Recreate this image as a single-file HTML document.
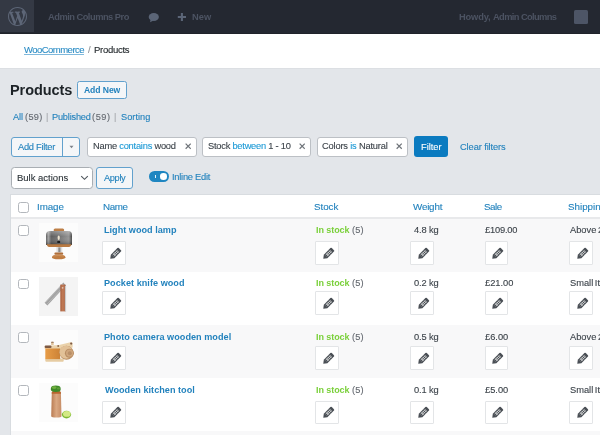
<!DOCTYPE html>
<html><head><meta charset="utf-8"><style>
html,body{margin:0;padding:0;background:#e3e6ea;}
body{width:600px;height:435px;overflow:hidden;position:relative;background:#e3e6ea;font-family:"Liberation Sans",sans-serif;}
div{box-sizing:border-box;}
.t{position:absolute;line-height:1;white-space:pre;will-change:transform;-webkit-text-stroke:0.12px currentColor;}
.bar{position:absolute;left:0;top:0;width:600px;height:33.6px;background:#242831;border-bottom:1.4px solid #20232a;}
.logo{position:absolute;left:0;top:0;width:33.8px;height:32.4px;background:#343944;}
.hdr{position:absolute;left:0;top:33.6px;width:600px;height:35px;background:#fff;border-bottom:1px solid #dcdfe3;}
.btn2{position:absolute;background:#f4f6f8;border:1px solid #62a1cd;border-radius:3px;}
.chip{position:absolute;background:#fff;border:1px solid #bcc0c5;border-radius:3px;top:137.3px;height:19.4px;}
.x{position:absolute;top:143.4px;width:6.4px;height:6.4px;}
.table{position:absolute;left:10.3px;top:194px;width:620px;height:260px;background:#fff;border:1px solid #d8dce0;}
.row{position:absolute;left:11.3px;width:600px;}
.cb{position:absolute;left:18.4px;width:10.5px;height:10.5px;border:1px solid #b3b7bc;border-radius:2.5px;background:#fff;}
.img{position:absolute;left:39.2px;width:39px;height:39px;}
.img svg{display:block;}
.pb{position:absolute;width:23.5px;height:23.5px;background:#fff;border:1px solid #e3e5e7;border-radius:1px;}
</style></head><body>
<div class="bar"></div>
<div class="logo"><svg style="position:absolute;left:8.2px;top:6.7px" width="19" height="19" viewBox="0 0 20 20"><path fill="#5d6677" d="M20 10c0-5.51-4.49-10-10-10C4.48 0 0 4.49 0 10c0 5.52 4.48 10 10 10 5.510 0 10-4.480 10-10zM7.78 15.37L4.37 6.22c.55-.02 1.17-.08 1.17-.08.5-.06.44-1.13-.06-1.11 0 0-1.45.11-2.37.11-.18 0-.37 0-.58-.01C4.12 2.69 6.87 1.11 10 1.11c2.33 0 4.45.87 6.05 2.34-.68-.11-1.65.39-1.65 1.58 0 .74.45 1.36.9 2.1.35.61.55 1.36.55 2.46 0 1.49-1.4 5-1.4 5l-3.03-8.37c.54-.02.82-.17.82-.17.5-.05.44-1.25-.06-1.22 0 0-1.44.12-2.38.12-.87 0-2.33-.12-2.33-.12-.5-.03-.56 1.2-.06 1.22l.92.08 1.26 3.41zM17.41 10c.24-.64.74-1.87.43-4.25.7 1.29 1.05 2.71 1.05 4.25 0 3.29-1.73 6.24-4.4 7.78.97-2.59 1.94-5.2 2.92-7.780zM6.1 18.09C3.12 16.65 1.11 13.53 1.11 10c0-1.3.23-2.48.72-3.59C3.25 10.3 4.67 14.2 6.1 18.09zm4.03-6.63l2.58 6.98c-.86.29-1.76.45-2.71.45-.79 0-1.57-.11-2.29-.33.81-2.38 1.62-4.74 2.42-7.1z"/></svg></div>
<svg style="position:absolute;left:148px;top:12px" width="12" height="11" viewBox="0 0 12 11"><ellipse cx="5.8" cy="5" rx="5.1" ry="4" fill="#5b6577"/><path d="M2.6 7.5 L2 10.3 L5.6 8.6 Z" fill="#5b6577"/></svg>
<svg style="position:absolute;left:177px;top:12px" width="10" height="10" viewBox="0 0 10 10"><path d="M4.9 1 V9 M0.8 5 H9" stroke="#5b6577" stroke-width="2.1"/></svg>
<div style="position:absolute;left:574.3px;top:9.5px;width:14px;height:14px;background:#4d5566;border-radius:1.5px"></div>
<div class="hdr"></div>
<div class="btn2" style="left:77.4px;top:81px;width:49.5px;height:18.2px;border-radius:2.5px"></div>
<div class="btn2" style="left:10.5px;top:136.7px;width:69.8px;height:20px"></div>
<div style="position:absolute;left:62px;top:137px;width:1px;height:19px;background:#62a1cd"></div>
<svg style="position:absolute;left:69px;top:145px" width="5" height="4" viewBox="0 0 5 4"><path d="M0.5 0.8 H4.5 L2.5 3.2 Z" fill="#7b8088"/></svg>
<div class="chip" style="left:87.4px;width:109.5px"></div>
<div class="chip" style="left:202.4px;width:109px"></div>
<div class="chip" style="left:316.6px;width:91.8px"></div>
<svg class="x" style="left:184.7px" viewBox="0 0 7 7"><path d="M0.7 0.7 L6.3 6.3 M6.3 0.7 L0.7 6.3" stroke="#6f747a" stroke-width="1.35"/></svg>
<svg class="x" style="left:299px" viewBox="0 0 7 7"><path d="M0.7 0.7 L6.3 6.3 M6.3 0.7 L0.7 6.3" stroke="#6f747a" stroke-width="1.35"/></svg>
<svg class="x" style="left:396.4px" viewBox="0 0 7 7"><path d="M0.7 0.7 L6.3 6.3 M6.3 0.7 L0.7 6.3" stroke="#6f747a" stroke-width="1.35"/></svg>
<div style="position:absolute;left:414px;top:136px;width:34px;height:21px;background:#0b7bc0;border-radius:3px"></div>
<div style="position:absolute;left:11px;top:167px;width:82.3px;height:22px;background:#fff;border:1px solid #a9aeb3;border-radius:3.5px"></div>
<svg style="position:absolute;left:79.9px;top:175.4px" width="9" height="6" viewBox="0 0 9 6"><path d="M1.2 1.1 L4.5 4.3 L7.8 1.1" fill="none" stroke="#50575e" stroke-width="1.15"/></svg>
<div class="btn2" style="left:96px;top:167px;width:37px;height:21.8px"></div>
<div style="position:absolute;left:149.2px;top:171px;width:19.9px;height:11px;background:#1f86c1;border-radius:5.5px"></div>
<div style="position:absolute;left:160.45px;top:173.3px;width:6.6px;height:6.6px;background:#fff;border-radius:50%"></div>
<div style="position:absolute;left:154.6px;top:174.9px;width:1.2px;height:3.6px;background:#e6f1f8"></div>
<div class="table"></div>
<div style="position:absolute;left:11.3px;top:216.8px;width:600px;height:2.2px;background:#e8e9eb"></div>
<div class="cb" style="top:202.1px"></div>
<div class="row" style="top:219px;height:52.5px;background:#f8f8f9"></div>
<div class="row" style="top:271.5px;height:53.39999999999998px;background:#ffffff"></div>
<div class="row" style="top:324.9px;height:53.30000000000001px;background:#f8f8f9"></div>
<div class="row" style="top:378.2px;height:52.80000000000001px;background:#ffffff"></div>
<div class="row" style="top:431px;height:10px;background:#f8f8f9"></div>
<div class="cb" style="top:225.3px"></div>
<div class="img" style="top:222.8px"><svg width="39" height="39" viewBox="0 0 39 39"><defs><linearGradient id="gl" x1="0" x2="1" y1="0" y2="0"><stop offset="0" stop-color="#4a4a4a"/><stop offset="0.08" stop-color="#a8a8a8"/><stop offset="0.2" stop-color="#5f5f5f"/><stop offset="0.55" stop-color="#767676"/><stop offset="0.88" stop-color="#959595"/><stop offset="1" stop-color="#454545"/></linearGradient><linearGradient id="gv" x1="0" x2="0" y1="0" y2="1"><stop offset="0" stop-color="#fff" stop-opacity="0.3"/><stop offset="0.4" stop-color="#fff" stop-opacity="0"/><stop offset="1" stop-color="#000" stop-opacity="0.35"/></linearGradient></defs><rect width="39" height="39" fill="#fcfcfc"/><rect x="14.6" y="5.4" width="10.6" height="3" rx="1.5" fill="#bd7f47"/><path d="M7.1 11.8 Q7.2 8 11 8 L29 8 Q32.9 8 33 11.8 L33 22 L7.1 22 Z" fill="url(#gl)"/><path d="M7.1 11.8 Q7.2 8 11 8 L29 8 Q32.9 8 33 11.8 L33 22 L7.1 22 Z" fill="url(#gv)"/><ellipse cx="19.7" cy="14.8" rx="1.1" ry="2.3" fill="#ece3cf"/><rect x="18.3" y="18" width="2.8" height="2" fill="#1e1e1e"/><path d="M7.6 21.2 L32.6 21.2 Q31.8 24 28.8 24.1 L11.2 24.1 Q8.3 24 7.6 21.2 Z" fill="#b97a42"/><rect x="17.4" y="24" width="5.9" height="5.6" fill="#dedede"/><rect x="19.3" y="24.4" width="2.2" height="4.8" fill="#8a8a8a"/><rect x="15.4" y="29.4" width="8.8" height="2.4" rx="1" fill="#b06f3b"/><path d="M13 34.2 Q13.2 31.4 19.7 31.4 Q26.2 31.4 26.4 34.2 Q26.3 36.3 19.7 36.3 Q13.1 36.3 13 34.2 Z" fill="#bf7d43"/><path d="M14.4 33 Q19.7 32 25 33" stroke="#dba16c" stroke-width="0.6" fill="none"/></svg></div>
<div class="pb" style="left:102.3px;top:241.2px"><svg width="16" height="16" viewBox="0 0 16 16" style="position:absolute;left:3.4px;top:3.9px"><g transform="rotate(-45 8 8)"><path d="M1.3 8 L4.6 5.5 L13.9 5.5 Q14.9 5.5 14.9 6.5 L14.9 9.5 Q14.9 10.5 13.9 10.5 L4.6 10.5 Z" fill="#4a4f55"/><path d="M5.4 7.2 H12.4 M5.4 8.8 H12.4 M7.2 6.4 V9.6 M9.2 6.4 V9.6 M11.2 6.4 V9.6" stroke="#e4e5e6" stroke-width="0.7"/></g></svg></div>
<div class="pb" style="left:315.4px;top:241.2px"><svg width="16" height="16" viewBox="0 0 16 16" style="position:absolute;left:3.4px;top:3.9px"><g transform="rotate(-45 8 8)"><path d="M1.3 8 L4.6 5.5 L13.9 5.5 Q14.9 5.5 14.9 6.5 L14.9 9.5 Q14.9 10.5 13.9 10.5 L4.6 10.5 Z" fill="#4a4f55"/><path d="M5.4 7.2 H12.4 M5.4 8.8 H12.4 M7.2 6.4 V9.6 M9.2 6.4 V9.6 M11.2 6.4 V9.6" stroke="#e4e5e6" stroke-width="0.7"/></g></svg></div>
<div class="pb" style="left:410.2px;top:241.2px"><svg width="16" height="16" viewBox="0 0 16 16" style="position:absolute;left:3.4px;top:3.9px"><g transform="rotate(-45 8 8)"><path d="M1.3 8 L4.6 5.5 L13.9 5.5 Q14.9 5.5 14.9 6.5 L14.9 9.5 Q14.9 10.5 13.9 10.5 L4.6 10.5 Z" fill="#4a4f55"/><path d="M5.4 7.2 H12.4 M5.4 8.8 H12.4 M7.2 6.4 V9.6 M9.2 6.4 V9.6 M11.2 6.4 V9.6" stroke="#e4e5e6" stroke-width="0.7"/></g></svg></div>
<div class="pb" style="left:484.9px;top:241.2px"><svg width="16" height="16" viewBox="0 0 16 16" style="position:absolute;left:3.4px;top:3.9px"><g transform="rotate(-45 8 8)"><path d="M1.3 8 L4.6 5.5 L13.9 5.5 Q14.9 5.5 14.9 6.5 L14.9 9.5 Q14.9 10.5 13.9 10.5 L4.6 10.5 Z" fill="#4a4f55"/><path d="M5.4 7.2 H12.4 M5.4 8.8 H12.4 M7.2 6.4 V9.6 M9.2 6.4 V9.6 M11.2 6.4 V9.6" stroke="#e4e5e6" stroke-width="0.7"/></g></svg></div>
<div class="pb" style="left:569.4px;top:241.2px"><svg width="16" height="16" viewBox="0 0 16 16" style="position:absolute;left:3.4px;top:3.9px"><g transform="rotate(-45 8 8)"><path d="M1.3 8 L4.6 5.5 L13.9 5.5 Q14.9 5.5 14.9 6.5 L14.9 9.5 Q14.9 10.5 13.9 10.5 L4.6 10.5 Z" fill="#4a4f55"/><path d="M5.4 7.2 H12.4 M5.4 8.8 H12.4 M7.2 6.4 V9.6 M9.2 6.4 V9.6 M11.2 6.4 V9.6" stroke="#e4e5e6" stroke-width="0.7"/></g></svg></div>
<div class="cb" style="top:278.6px"></div>
<div class="img" style="top:276.6px"><svg width="39" height="39" viewBox="0 0 39 39"><defs><linearGradient id="kh" x1="0" x2="1"><stop offset="0" stop-color="#a95f3e"/><stop offset="0.5" stop-color="#c27c57"/><stop offset="1" stop-color="#a85e3f"/></linearGradient></defs><rect width="39" height="39" fill="#f4f4f4"/><path d="M24.4 5.4 L26.8 8.4 L8.4 28.6 L5.6 25.8 Z" fill="#a2a2a2"/><path d="M23.8 7 L6.6 25.4 M25.2 8.8 L7.8 27.4" stroke="#c6c6c6" stroke-width="0.55"/><rect x="21.3" y="7.6" width="5.2" height="26.8" fill="url(#kh)"/><rect x="25.9" y="9" width="1.2" height="25.4" fill="#cbcbcb"/><circle cx="23.6" cy="10.8" r="0.9" fill="#e2c6b4"/></svg></div>
<div class="pb" style="left:102.3px;top:291.1px"><svg width="16" height="16" viewBox="0 0 16 16" style="position:absolute;left:3.4px;top:3.9px"><g transform="rotate(-45 8 8)"><path d="M1.3 8 L4.6 5.5 L13.9 5.5 Q14.9 5.5 14.9 6.5 L14.9 9.5 Q14.9 10.5 13.9 10.5 L4.6 10.5 Z" fill="#4a4f55"/><path d="M5.4 7.2 H12.4 M5.4 8.8 H12.4 M7.2 6.4 V9.6 M9.2 6.4 V9.6 M11.2 6.4 V9.6" stroke="#e4e5e6" stroke-width="0.7"/></g></svg></div>
<div class="pb" style="left:315.4px;top:291.1px"><svg width="16" height="16" viewBox="0 0 16 16" style="position:absolute;left:3.4px;top:3.9px"><g transform="rotate(-45 8 8)"><path d="M1.3 8 L4.6 5.5 L13.9 5.5 Q14.9 5.5 14.9 6.5 L14.9 9.5 Q14.9 10.5 13.9 10.5 L4.6 10.5 Z" fill="#4a4f55"/><path d="M5.4 7.2 H12.4 M5.4 8.8 H12.4 M7.2 6.4 V9.6 M9.2 6.4 V9.6 M11.2 6.4 V9.6" stroke="#e4e5e6" stroke-width="0.7"/></g></svg></div>
<div class="pb" style="left:410.2px;top:291.1px"><svg width="16" height="16" viewBox="0 0 16 16" style="position:absolute;left:3.4px;top:3.9px"><g transform="rotate(-45 8 8)"><path d="M1.3 8 L4.6 5.5 L13.9 5.5 Q14.9 5.5 14.9 6.5 L14.9 9.5 Q14.9 10.5 13.9 10.5 L4.6 10.5 Z" fill="#4a4f55"/><path d="M5.4 7.2 H12.4 M5.4 8.8 H12.4 M7.2 6.4 V9.6 M9.2 6.4 V9.6 M11.2 6.4 V9.6" stroke="#e4e5e6" stroke-width="0.7"/></g></svg></div>
<div class="pb" style="left:484.9px;top:291.1px"><svg width="16" height="16" viewBox="0 0 16 16" style="position:absolute;left:3.4px;top:3.9px"><g transform="rotate(-45 8 8)"><path d="M1.3 8 L4.6 5.5 L13.9 5.5 Q14.9 5.5 14.9 6.5 L14.9 9.5 Q14.9 10.5 13.9 10.5 L4.6 10.5 Z" fill="#4a4f55"/><path d="M5.4 7.2 H12.4 M5.4 8.8 H12.4 M7.2 6.4 V9.6 M9.2 6.4 V9.6 M11.2 6.4 V9.6" stroke="#e4e5e6" stroke-width="0.7"/></g></svg></div>
<div class="pb" style="left:569.4px;top:291.1px"><svg width="16" height="16" viewBox="0 0 16 16" style="position:absolute;left:3.4px;top:3.9px"><g transform="rotate(-45 8 8)"><path d="M1.3 8 L4.6 5.5 L13.9 5.5 Q14.9 5.5 14.9 6.5 L14.9 9.5 Q14.9 10.5 13.9 10.5 L4.6 10.5 Z" fill="#4a4f55"/><path d="M5.4 7.2 H12.4 M5.4 8.8 H12.4 M7.2 6.4 V9.6 M9.2 6.4 V9.6 M11.2 6.4 V9.6" stroke="#e4e5e6" stroke-width="0.7"/></g></svg></div>
<div class="cb" style="top:332.1px"></div>
<div class="img" style="top:330.1px"><svg width="39" height="39" viewBox="0 0 39 39"><defs><linearGradient id="cf" x1="0" x2="1"><stop offset="0" stop-color="#e89d48"/><stop offset="1" stop-color="#cc8236"/></linearGradient></defs><rect width="39" height="39" fill="#fcfcfc"/><rect x="6.3" y="28.4" width="18.4" height="3.3" rx="1" fill="#e6cca3"/><path d="M5.7 16 L20 15 L31.5 12.3 Q33.4 12 33.6 13.5 L33.6 17.5 L21.2 19 L5.7 19 Z" fill="#ead2ab"/><rect x="12.1" y="11.8" width="2.6" height="3.2" rx="0.6" fill="#e2c59c"/><rect x="12.1" y="11.8" width="2.6" height="1" rx="0.5" fill="#8c6a50"/><rect x="6.3" y="18.5" width="14.9" height="10.6" fill="url(#cf)"/><rect x="5.7" y="15.6" width="6.8" height="2.4" rx="1" fill="#7d5a45"/><circle cx="19.2" cy="16" r="0.9" fill="#8a6548"/><circle cx="32.2" cy="13.6" r="1.1" fill="#7d5a45"/><circle cx="27.5" cy="22.8" r="7" fill="#b98d62"/><circle cx="27.1" cy="22.2" r="6.5" fill="#e2c197"/><circle cx="30.4" cy="23.2" r="4.5" fill="#b88d63"/><circle cx="30.6" cy="23.1" r="3.6" fill="#cfa67c"/><circle cx="30.8" cy="23.2" r="2" fill="#b98f68"/></svg></div>
<div class="pb" style="left:102.3px;top:346.1px"><svg width="16" height="16" viewBox="0 0 16 16" style="position:absolute;left:3.4px;top:3.9px"><g transform="rotate(-45 8 8)"><path d="M1.3 8 L4.6 5.5 L13.9 5.5 Q14.9 5.5 14.9 6.5 L14.9 9.5 Q14.9 10.5 13.9 10.5 L4.6 10.5 Z" fill="#4a4f55"/><path d="M5.4 7.2 H12.4 M5.4 8.8 H12.4 M7.2 6.4 V9.6 M9.2 6.4 V9.6 M11.2 6.4 V9.6" stroke="#e4e5e6" stroke-width="0.7"/></g></svg></div>
<div class="pb" style="left:315.4px;top:346.1px"><svg width="16" height="16" viewBox="0 0 16 16" style="position:absolute;left:3.4px;top:3.9px"><g transform="rotate(-45 8 8)"><path d="M1.3 8 L4.6 5.5 L13.9 5.5 Q14.9 5.5 14.9 6.5 L14.9 9.5 Q14.9 10.5 13.9 10.5 L4.6 10.5 Z" fill="#4a4f55"/><path d="M5.4 7.2 H12.4 M5.4 8.8 H12.4 M7.2 6.4 V9.6 M9.2 6.4 V9.6 M11.2 6.4 V9.6" stroke="#e4e5e6" stroke-width="0.7"/></g></svg></div>
<div class="pb" style="left:410.2px;top:346.1px"><svg width="16" height="16" viewBox="0 0 16 16" style="position:absolute;left:3.4px;top:3.9px"><g transform="rotate(-45 8 8)"><path d="M1.3 8 L4.6 5.5 L13.9 5.5 Q14.9 5.5 14.9 6.5 L14.9 9.5 Q14.9 10.5 13.9 10.5 L4.6 10.5 Z" fill="#4a4f55"/><path d="M5.4 7.2 H12.4 M5.4 8.8 H12.4 M7.2 6.4 V9.6 M9.2 6.4 V9.6 M11.2 6.4 V9.6" stroke="#e4e5e6" stroke-width="0.7"/></g></svg></div>
<div class="pb" style="left:484.9px;top:346.1px"><svg width="16" height="16" viewBox="0 0 16 16" style="position:absolute;left:3.4px;top:3.9px"><g transform="rotate(-45 8 8)"><path d="M1.3 8 L4.6 5.5 L13.9 5.5 Q14.9 5.5 14.9 6.5 L14.9 9.5 Q14.9 10.5 13.9 10.5 L4.6 10.5 Z" fill="#4a4f55"/><path d="M5.4 7.2 H12.4 M5.4 8.8 H12.4 M7.2 6.4 V9.6 M9.2 6.4 V9.6 M11.2 6.4 V9.6" stroke="#e4e5e6" stroke-width="0.7"/></g></svg></div>
<div class="pb" style="left:569.4px;top:346.1px"><svg width="16" height="16" viewBox="0 0 16 16" style="position:absolute;left:3.4px;top:3.9px"><g transform="rotate(-45 8 8)"><path d="M1.3 8 L4.6 5.5 L13.9 5.5 Q14.9 5.5 14.9 6.5 L14.9 9.5 Q14.9 10.5 13.9 10.5 L4.6 10.5 Z" fill="#4a4f55"/><path d="M5.4 7.2 H12.4 M5.4 8.8 H12.4 M7.2 6.4 V9.6 M9.2 6.4 V9.6 M11.2 6.4 V9.6" stroke="#e4e5e6" stroke-width="0.7"/></g></svg></div>
<div class="cb" style="top:385px"></div>
<div class="img" style="top:383.4px"><svg width="39" height="39" viewBox="0 0 39 39"><defs><linearGradient id="tb" x1="0" x2="1"><stop offset="0" stop-color="#b97b52"/><stop offset="0.5" stop-color="#daa882"/><stop offset="1" stop-color="#c68d66"/></linearGradient></defs><rect width="39" height="39" fill="#fcfcfc"/><path d="M12.8 9.4 Q13 8 17.3 8 Q21.6 8 21.9 9.4 L22.5 33.2 Q22.5 34.6 17.4 34.6 Q12.3 34.6 12.2 33.2 Z" fill="url(#tb)"/><path d="M12.8 9.4 Q13 8 17.3 8 Q21.6 8 21.9 9.4 L22 10.8 L12.7 10.8 Z" fill="#b8652f"/><path d="M11.8 6.6 Q11.6 3 14.8 2.8 Q16.8 2 18.8 2.8 Q21.9 3 21.7 6.4 Q21.8 8.9 16.8 8.9 Q11.9 9 11.8 6.6 Z" fill="#3f8a2a"/><ellipse cx="15.2" cy="4.6" rx="2.4" ry="1.4" fill="#72b040"/><ellipse cx="19.4" cy="5.4" rx="1.6" ry="1.1" fill="#5e9f38"/><ellipse cx="27.5" cy="31.6" rx="4.6" ry="3.8" fill="#7cb832"/><ellipse cx="27.8" cy="30.9" rx="3.8" ry="2.9" fill="#d4e985"/></svg></div>
<div class="pb" style="left:102.3px;top:400.5px"><svg width="16" height="16" viewBox="0 0 16 16" style="position:absolute;left:3.4px;top:3.9px"><g transform="rotate(-45 8 8)"><path d="M1.3 8 L4.6 5.5 L13.9 5.5 Q14.9 5.5 14.9 6.5 L14.9 9.5 Q14.9 10.5 13.9 10.5 L4.6 10.5 Z" fill="#4a4f55"/><path d="M5.4 7.2 H12.4 M5.4 8.8 H12.4 M7.2 6.4 V9.6 M9.2 6.4 V9.6 M11.2 6.4 V9.6" stroke="#e4e5e6" stroke-width="0.7"/></g></svg></div>
<div class="pb" style="left:315.4px;top:400.5px"><svg width="16" height="16" viewBox="0 0 16 16" style="position:absolute;left:3.4px;top:3.9px"><g transform="rotate(-45 8 8)"><path d="M1.3 8 L4.6 5.5 L13.9 5.5 Q14.9 5.5 14.9 6.5 L14.9 9.5 Q14.9 10.5 13.9 10.5 L4.6 10.5 Z" fill="#4a4f55"/><path d="M5.4 7.2 H12.4 M5.4 8.8 H12.4 M7.2 6.4 V9.6 M9.2 6.4 V9.6 M11.2 6.4 V9.6" stroke="#e4e5e6" stroke-width="0.7"/></g></svg></div>
<div class="pb" style="left:410.2px;top:400.5px"><svg width="16" height="16" viewBox="0 0 16 16" style="position:absolute;left:3.4px;top:3.9px"><g transform="rotate(-45 8 8)"><path d="M1.3 8 L4.6 5.5 L13.9 5.5 Q14.9 5.5 14.9 6.5 L14.9 9.5 Q14.9 10.5 13.9 10.5 L4.6 10.5 Z" fill="#4a4f55"/><path d="M5.4 7.2 H12.4 M5.4 8.8 H12.4 M7.2 6.4 V9.6 M9.2 6.4 V9.6 M11.2 6.4 V9.6" stroke="#e4e5e6" stroke-width="0.7"/></g></svg></div>
<div class="pb" style="left:484.9px;top:400.5px"><svg width="16" height="16" viewBox="0 0 16 16" style="position:absolute;left:3.4px;top:3.9px"><g transform="rotate(-45 8 8)"><path d="M1.3 8 L4.6 5.5 L13.9 5.5 Q14.9 5.5 14.9 6.5 L14.9 9.5 Q14.9 10.5 13.9 10.5 L4.6 10.5 Z" fill="#4a4f55"/><path d="M5.4 7.2 H12.4 M5.4 8.8 H12.4 M7.2 6.4 V9.6 M9.2 6.4 V9.6 M11.2 6.4 V9.6" stroke="#e4e5e6" stroke-width="0.7"/></g></svg></div>
<div class="pb" style="left:569.4px;top:400.5px"><svg width="16" height="16" viewBox="0 0 16 16" style="position:absolute;left:3.4px;top:3.9px"><g transform="rotate(-45 8 8)"><path d="M1.3 8 L4.6 5.5 L13.9 5.5 Q14.9 5.5 14.9 6.5 L14.9 9.5 Q14.9 10.5 13.9 10.5 L4.6 10.5 Z" fill="#4a4f55"/><path d="M5.4 7.2 H12.4 M5.4 8.8 H12.4 M7.2 6.4 V9.6 M9.2 6.4 V9.6 M11.2 6.4 V9.6" stroke="#e4e5e6" stroke-width="0.7"/></g></svg></div>
<div class="t" style="left:47.75px;top:13.00px;font-size:9.3px;font-weight:700;color:#4c5362;letter-spacing:-0.503px;-webkit-text-stroke:0;">Admin Columns Pro</div>
<div class="t" style="left:192.00px;top:13.00px;font-size:9.3px;font-weight:700;color:#4c5362;letter-spacing:0.0px;-webkit-text-stroke:0;">New</div>
<div class="t" style="left:458.50px;top:13.00px;font-size:9.3px;font-weight:700;color:#4c5362;letter-spacing:-0.15px;-webkit-text-stroke:0;">Howdy,</div>
<div class="t" style="left:493.25px;top:13.00px;font-size:9.3px;font-weight:700;color:#4c5362;letter-spacing:-0.604px;-webkit-text-stroke:0;">Admin Columns</div>
<div class="t" style="left:23.70px;top:45.00px;font-size:9.5px;font-weight:400;color:#2a8bc4;letter-spacing:-0.53px;text-decoration:underline;text-underline-offset:1px;text-decoration-color:#80b9dc;-webkit-text-stroke:0.1px currentColor;">WooCommerce</div>
<div class="t" style="left:87.60px;top:45.00px;font-size:9.5px;font-weight:400;color:#8c8f94;letter-spacing:0px;">/</div>
<div class="t" style="left:93.95px;top:45.00px;font-size:9.5px;font-weight:400;color:#1d2327;letter-spacing:-0.286px;">Products</div>
<div class="t" style="left:10.30px;top:83.00px;font-size:14.5px;font-weight:700;color:#1d2327;letter-spacing:-0.079px;-webkit-text-stroke:0;">Products</div>
<div class="t" style="left:83.85px;top:86.00px;font-size:8.6px;font-weight:700;color:#2282bd;letter-spacing:-0.083px;-webkit-text-stroke:0;">Add New</div>
<div class="t" style="left:12.50px;top:113.00px;font-size:9.2px;font-weight:400;color:#2282bd;letter-spacing:-0.125px;">All</div>
<div class="t" style="left:24.50px;top:113.00px;font-size:9.2px;font-weight:400;color:#646970;letter-spacing:0.333px;">(59)</div>
<div class="t" style="left:45.50px;top:113.00px;font-size:9.2px;font-weight:400;color:#a7aaad;letter-spacing:0px;">|</div>
<div class="t" style="left:51.75px;top:113.00px;font-size:9.2px;font-weight:400;color:#2282bd;letter-spacing:-0.188px;">Published</div>
<div class="t" style="left:92.00px;top:113.00px;font-size:9.2px;font-weight:400;color:#646970;letter-spacing:0.583px;">(59)</div>
<div class="t" style="left:114.25px;top:113.00px;font-size:9.2px;font-weight:400;color:#a7aaad;letter-spacing:0px;">|</div>
<div class="t" style="left:120.75px;top:113.00px;font-size:9.2px;font-weight:400;color:#2282bd;letter-spacing:0.042px;">Sorting</div>
<div class="t" style="left:18.20px;top:143.00px;font-size:9.3px;font-weight:400;color:#2282bd;letter-spacing:-0.272px;">Add Filter</div>
<div class="t" style="left:93.25px;top:142.30px;font-size:9.3px;font-weight:400;color:#3c434a;letter-spacing:-0.229px;">Name <span style="color:#1e9ad6">contains</span> wood</div>
<div class="t" style="left:207.90px;top:142.30px;font-size:9.3px;font-weight:400;color:#3c434a;letter-spacing:-0.237px;">Stock <span style="color:#1e9ad6">between</span> 1 - 10</div>
<div class="t" style="left:322.10px;top:142.30px;font-size:9.3px;font-weight:400;color:#3c434a;letter-spacing:-0.184px;">Colors <span style="color:#1e9ad6">is</span> Natural</div>
<div class="t" style="left:420.65px;top:143.00px;font-size:9.3px;font-weight:400;color:#ffffff;letter-spacing:-0.03px;-webkit-text-stroke:0.1px #fff;">Filter</div>
<div class="t" style="left:459.50px;top:143.00px;font-size:9.3px;font-weight:400;color:#2282bd;letter-spacing:-0.104px;">Clear filters</div>
<div class="t" style="left:17.05px;top:173.00px;font-size:9.5px;font-weight:400;color:#2c3338;letter-spacing:-0.005px;">Bulk actions</div>
<div class="t" style="left:103.60px;top:174.00px;font-size:9.3px;font-weight:400;color:#2282bd;letter-spacing:-0.388px;">Apply</div>
<div class="t" style="left:171.55px;top:173.00px;font-size:9.3px;font-weight:400;color:#2282bd;letter-spacing:-0.25px;">Inline Edit</div>
<div class="t" style="left:36.90px;top:202.00px;font-size:9.8px;font-weight:400;color:#2282bd;letter-spacing:-0.088px;">Image</div>
<div class="t" style="left:102.75px;top:202.00px;font-size:9.8px;font-weight:400;color:#2282bd;letter-spacing:-0.4px;">Name</div>
<div class="t" style="left:314.20px;top:202.00px;font-size:9.8px;font-weight:400;color:#2282bd;letter-spacing:-0.05px;">Stock</div>
<div class="t" style="left:412.50px;top:202.00px;font-size:9.8px;font-weight:400;color:#2282bd;letter-spacing:-0.19px;">Weight</div>
<div class="t" style="left:483.50px;top:202.00px;font-size:9.8px;font-weight:400;color:#2282bd;letter-spacing:-0.45px;">Sale</div>
<div class="t" style="left:568.40px;top:202.00px;font-size:9.8px;font-weight:400;color:#2282bd;letter-spacing:0px;">Shipping</div>
<div class="t" style="left:104.40px;top:226.00px;font-size:9.1px;font-weight:700;color:#2282bd;letter-spacing:0.021px;-webkit-text-stroke:0;">Light wood lamp</div>
<div class="t" style="left:315.60px;top:226.00px;font-size:9px;font-weight:700;color:#7ad03a;letter-spacing:-0.071px;-webkit-text-stroke:0;">In stock</div>
<div class="t" style="left:351.80px;top:226.00px;font-size:9.3px;font-weight:400;color:#646970;letter-spacing:0.075px;">(5)</div>
<div class="t" style="left:413.75px;top:226.00px;font-size:9.3px;font-weight:400;color:#3c434a;letter-spacing:-0.14px;">4.8 kg</div>
<div class="t" style="left:485.05px;top:226.00px;font-size:9.3px;font-weight:400;color:#3c434a;letter-spacing:-0.2px;">£109.00</div>
<div class="t" style="left:570.20px;top:226.00px;font-size:9.3px;font-weight:400;color:#3c434a;letter-spacing:0px;word-spacing:-1px;">Above 20</div>
<div class="t" style="left:104.40px;top:279.00px;font-size:9.1px;font-weight:700;color:#2282bd;letter-spacing:0.041px;-webkit-text-stroke:0;">Pocket knife wood</div>
<div class="t" style="left:315.60px;top:279.00px;font-size:9px;font-weight:700;color:#7ad03a;letter-spacing:-0.071px;-webkit-text-stroke:0;">In stock</div>
<div class="t" style="left:351.80px;top:279.00px;font-size:9.3px;font-weight:400;color:#646970;letter-spacing:0.075px;">(5)</div>
<div class="t" style="left:413.75px;top:279.00px;font-size:9.3px;font-weight:400;color:#3c434a;letter-spacing:-0.14px;">0.2 kg</div>
<div class="t" style="left:485.05px;top:279.00px;font-size:9.3px;font-weight:400;color:#3c434a;letter-spacing:0px;">£21.00</div>
<div class="t" style="left:569.70px;top:279.00px;font-size:9.3px;font-weight:400;color:#3c434a;letter-spacing:0px;word-spacing:-1px;">Small Items</div>
<div class="t" style="left:104.40px;top:333.00px;font-size:9.1px;font-weight:700;color:#2282bd;letter-spacing:0.035px;-webkit-text-stroke:0;">Photo camera wooden model</div>
<div class="t" style="left:315.60px;top:333.00px;font-size:9px;font-weight:700;color:#7ad03a;letter-spacing:-0.071px;-webkit-text-stroke:0;">In stock</div>
<div class="t" style="left:351.80px;top:333.00px;font-size:9.3px;font-weight:400;color:#646970;letter-spacing:0.075px;">(5)</div>
<div class="t" style="left:413.75px;top:333.00px;font-size:9.3px;font-weight:400;color:#3c434a;letter-spacing:-0.14px;">0.5 kg</div>
<div class="t" style="left:485.05px;top:333.00px;font-size:9.3px;font-weight:400;color:#3c434a;letter-spacing:0px;">£6.00</div>
<div class="t" style="left:570.20px;top:333.00px;font-size:9.3px;font-weight:400;color:#3c434a;letter-spacing:0px;word-spacing:-1px;">Above 20</div>
<div class="t" style="left:104.90px;top:386.00px;font-size:9.1px;font-weight:700;color:#2282bd;letter-spacing:0.031px;-webkit-text-stroke:0;">Wooden kitchen tool</div>
<div class="t" style="left:315.60px;top:386.00px;font-size:9px;font-weight:700;color:#7ad03a;letter-spacing:-0.071px;-webkit-text-stroke:0;">In stock</div>
<div class="t" style="left:351.80px;top:386.00px;font-size:9.3px;font-weight:400;color:#646970;letter-spacing:0.075px;">(5)</div>
<div class="t" style="left:413.75px;top:386.00px;font-size:9.3px;font-weight:400;color:#3c434a;letter-spacing:-0.14px;">0.1 kg</div>
<div class="t" style="left:485.05px;top:386.00px;font-size:9.3px;font-weight:400;color:#3c434a;letter-spacing:0px;">£5.00</div>
<div class="t" style="left:569.70px;top:386.00px;font-size:9.3px;font-weight:400;color:#3c434a;letter-spacing:0px;word-spacing:-1px;">Small Items</div>
</body></html>
